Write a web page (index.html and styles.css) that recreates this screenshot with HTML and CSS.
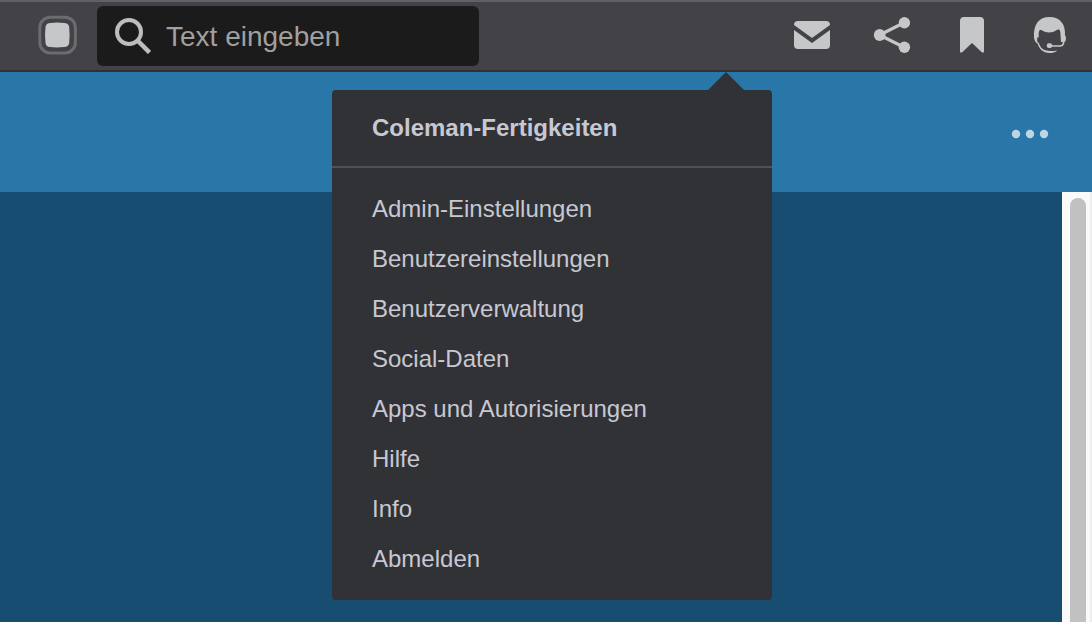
FILE: index.html
```html
<!DOCTYPE html>
<html lang="de">
<head>
<meta charset="utf-8">
<meta name="viewport" content="width=device-width, initial-scale=1">
<title>Coleman-Fertigkeiten</title>
<link rel="stylesheet" href="styles.css">
</head>
<body>
<header class="topbar">
  <button class="icon-button" type="button" aria-label="Startseite">
    <svg class="logo" viewBox="0 0 40 40" width="40" height="40" aria-hidden="true">
      <rect x="1.8" y="1.200" width="35.6" height="35.800" rx="10.5" fill="none" stroke="#6b6c70" stroke-width="3"/>
      <path d="M12.500 7Q19 6 26 7Q30.500 7 31.200 11Q32 19 31.200 27Q30.500 31 26 31Q19 31.800 12 31Q8 31 7.500 27Q6.500 19 7.500 11Q8 7 12.500 7Z" fill="#c6c7c9"/>
    </svg>
  </button>
  <label class="search">
    <svg viewBox="0 0 36 36" width="36" height="36" fill="none" stroke="#bdbdbd" aria-hidden="true">
      <circle cx="14" cy="14" r="12" stroke-width="4"/>
      <path d="M22.500 22.500L34.500 34.500" stroke-width="4.500"/>
    </svg>
    <input class="search-input" type="text" placeholder="Text eingeben" aria-label="Suche">
  </label>
  <nav class="actions" aria-label="Aktionen">
    <button class="icon-button" type="button" aria-label="Nachrichten">
      <svg viewBox="0 0 36 36" width="36" height="36" fill="#c6c7c9" aria-hidden="true">
        <path d="M4 4H32Q36 4 36 8L18 21L0 8Q0 4 4 4Z"/>
        <path d="M0 13L18 26L36 13V28Q36 32 32 32H4Q0 32 0 28Z"/>
      </svg>
    </button>
    <button class="icon-button" type="button" aria-label="Teilen">
      <svg viewBox="0 0 36 36" width="36" height="36" fill="#c6c7c9" aria-hidden="true">
        <path d="M30.500 5.500L5.500 18L30.500 30.500" fill="none" stroke="#c6c7c9" stroke-width="3.200"/>
        <circle cx="30.400" cy="5.800" r="5.700"/><circle cx="5.700" cy="18" r="5.900"/><circle cx="30.400" cy="30.200" r="5.700"/>
      </svg>
    </button>
    <button class="icon-button" type="button" aria-label="Lesezeichen">
      <svg viewBox="0 0 36 36" width="36" height="36" fill="#c6c7c9" aria-hidden="true">
        <path d="M10 0H26Q30 0 30 4V34Q30 37 27.500 35L18 26L8.500 35Q6 37 6 34V4Q6 0 10 0Z"/>
      </svg>
    </button>
    <button class="icon-button" type="button" aria-label="Benutzer">
      <svg viewBox="0 0 36 36" width="36" height="36" aria-hidden="true">
        <path d="M0 21C-.8 7 5 0 15.500 0C26 0 31.700 7 31 18.500Q32.200 19 32 22Q32 24.500 30 25H27L26.300 15Q26 12.500 24.300 12.300Q15.500 18.500 6.500 12.800Q4.700 13 4.700 16V20.500H3.200V24.500C5.500 26 5.500 29 7.500 31C10 33.300 13 34 16 34Q20 34 23.500 33.500C21 35.500 18.500 36 15.500 36C9 36 5 31.500 3.500 26.500Q1 25.500 0 21Z" fill="#c6c7c9"/>
        <path d="M30 23.500C29.500 28.500 28 29 25.500 29H17" fill="none" stroke="#c6c7c9" stroke-width="1.600"/>
        <rect x="12.700" y="26.300" width="5.500" height="4.700" rx="2.200" fill="#c6c7c9"/>
      </svg>
    </button>
  </nav>
  <section class="menu" aria-label="Benutzermenü">
    <h2 class="menu-title">Coleman-Fertigkeiten</h2>
    <ul class="menu-list">
      <li><a class="menu-link" href="#">Admin-Einstellungen</a></li>
      <li><a class="menu-link" href="#">Benutzereinstellungen</a></li>
      <li><a class="menu-link" href="#">Benutzerverwaltung</a></li>
      <li><a class="menu-link" href="#">Social-Daten</a></li>
      <li><a class="menu-link" href="#">Apps und Autorisierungen</a></li>
      <li><a class="menu-link" href="#">Hilfe</a></li>
      <li><a class="menu-link" href="#">Info</a></li>
      <li><a class="menu-link" href="#">Abmelden</a></li>
    </ul>
  </section>
</header>
<div class="banner">
  <button class="icon-button" type="button" aria-label="Mehr">
    <svg viewBox="0 0 36 8" width="36" height="8" fill="#bed5e4" aria-hidden="true">
      <circle cx="4" cy="4" r="4.200"/><circle cx="18" cy="4" r="4.200"/><circle cx="32" cy="4" r="4.200"/>
    </svg>
  </button>
</div>
<main class="content">
  <div class="scroll-track"><div class="scroll-thumb"></div></div>
</main>
</body>
</html>
```
FILE: styles.css
```css
* {
  box-sizing: border-box;
}

body {
  display: flex;
  flex-direction: column;
  min-height: 100vh;
  margin: 0;
  background: #184d72;
  font-family: "Liberation Sans", Arial, sans-serif;
  font-size: 24px;
}

.topbar {
  position: relative;
  display: flex;
  align-items: center;
  gap: 19px;
  padding: 4px 22px 4px 38px;
  background: #424247;
  border-top: 2px solid #606166;
  border-bottom: 2px solid #303236;
}

.icon-button {
  display: flex;
  padding: 0;
  border: 0;
  background: none;
  cursor: pointer;
}

.icon-button svg {
  display: block;
  overflow: visible;
}

.search {
  display: flex;
  align-items: center;
  flex: 0 1 35%;
  gap: 15px;
  max-width: 382px;
  height: 60px;
  padding: 0 18px;
  border-radius: 6px;
  background: #1b1b1b;
}

.search svg {
  flex: none;
}

.search-input {
  flex: 1;
  min-width: 0;
  padding: 2px 0 0;
  border: 0;
  outline: 0;
  background: none;
  color: #dddddd;
  font-family: inherit;
  font-size: 28px;
}

.search-input::placeholder {
  color: #a0a0a0;
  opacity: 1;
}

.actions {
  display: flex;
  gap: 44px;
  margin-left: auto;
  padding-bottom: 2px;
}

.menu {
  position: absolute;
  z-index: 1;
  top: calc(100% + 20px);
  right: 320px;
  width: 440px;
  border-radius: 4px;
  background: #313236;
  color: #c8c8d2;
}

.menu::before {
  content: "";
  position: absolute;
  right: 28px;
  bottom: 100%;
  border: solid transparent;
  border-width: 0 18px 18px;
  border-bottom-color: #313236;
}

.menu-title {
  margin: 0;
  padding: 18px 40px;
  border-bottom: 2px solid #505057;
  font-size: 24px;
  line-height: 40px;
}

.menu-list {
  margin: 0;
  padding: 16px 0;
  list-style: none;
}

.menu-link {
  display: block;
  padding: 0 40px;
  color: inherit;
  line-height: 50px;
  text-decoration: none;
}

.banner {
  display: flex;
  align-items: center;
  justify-content: flex-end;
  min-height: 120px;
  padding: 4px 44px 0;
  background: #2977a9;
}

.content {
  display: flex;
  flex: 1;
  justify-content: flex-end;
  background: #184d72;
}

.scroll-track {
  display: flex;
  width: 30px;
  padding: 6px 4px 0 8px;
  border-right: 2px solid #ededed;
  background: #fafafa;
}

.scroll-thumb {
  flex: 1;
  border-radius: 8px 8px 0 0;
  background: #c1c1c1;
}
```
